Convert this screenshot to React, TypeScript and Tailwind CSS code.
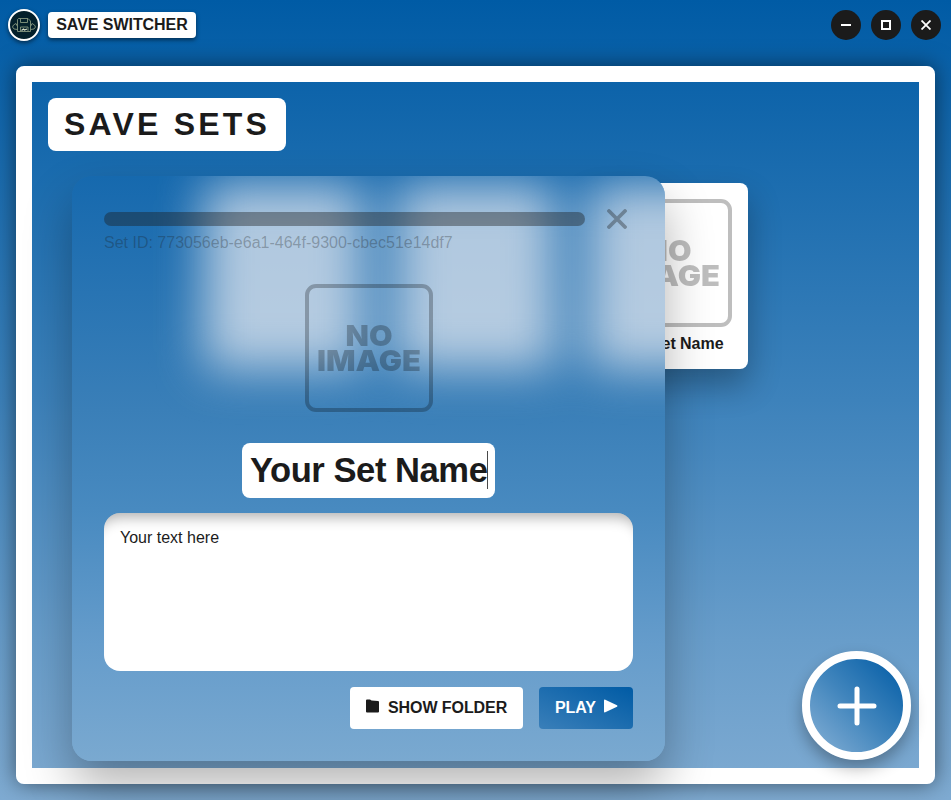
import React from "react";

function NoImage() {
  return (
    <svg width="128" height="128" viewBox="0 0 128 128" className="block shrink-0 opacity-25">
      <rect x="2" y="2" width="124" height="124" rx="9" fill="none" stroke="#000" strokeWidth="4" />
      <g
        fill="#000"
        fontWeight="900"
        fontSize="28.6"
        textAnchor="middle"
        className="font-[Inter,'Liberation_Sans',sans-serif]"
      >
        <text x="64" y="62" textLength="47" lengthAdjust="spacingAndGlyphs">NO</text>
        <text x="64" y="87" textLength="104" lengthAdjust="spacingAndGlyphs">IMAGE</text>
      </g>
    </svg>
  );
}

function SetCard() {
  return (
    <div className="flex w-40 flex-col items-center gap-2 rounded-lg bg-white p-4 shadow-[0_16px_32px_rgba(0,0,0,0.3)]">
      <NoImage />
      <span className="whitespace-nowrap text-base leading-[18px] font-bold tracking-[-0.05px]">Your Set Name</span>
    </div>
  );
}

function Logo() {
  return (
    <div className="size-8 rounded-full border-2 border-white bg-[#04202b] shadow-[0_2px_4px_rgba(0,0,0,0.5)]">
      <svg viewBox="0 0 28 28" width="28" height="28" fill="none" stroke="#84967f" strokeWidth="0.9">
        <path d="M8.500 7.500h9.500l2.500 2.500v10.500H7.500V8.500z" />
        <path d="M10.500 7.500v4h7v-4M10.500 20.500v-4.500h7.500v4.500" />
        <path d="M7.500 15.500L6 12.500 3.500 14 2.500 16 4 18l3.500 .5M20.500 15.500l1.500-3 2.500 1.500 1 2-1.500 2-3.500 .5" />
        <path d="M11.500 19.500l2-1.500 1 1 2.500-1" stroke="#d9dfc8" strokeWidth="1.200" />
      </svg>
    </div>
  );
}

function WindowButton({ children }: { children: React.ReactNode }) {
  return (
    <button className="flex size-[30px] items-center justify-center rounded-full bg-[#1b1b1b]">
      <svg width="10" height="10" viewBox="0 0 10 10" fill="none" stroke="#fff" strokeWidth="2">
        {children}
      </svg>
    </button>
  );
}

function GlassBackdrop() {
  return (
    <div className="absolute inset-0 overflow-hidden rounded-[20px] bg-[linear-gradient(180deg,#1669ae_0%,#3a7fb8_40%,#488ac0_57%,#659ccb_80%,#7aa9d0_100%)]">
      <div className="ml-[132px] flex gap-8 pt-[7px] blur-[24px]">
        <div className="h-[186px] w-40 shrink-0 rounded-lg bg-[#f0f0f3]/70" />
        <div className="h-[186px] w-40 shrink-0 rounded-lg bg-[#f0f0f3]/70" />
        <div className="h-[186px] w-40 shrink-0 rounded-lg bg-[#f0f0f3]/70" />
      </div>
    </div>
  );
}

function SetModal() {
  return (
    <div className="absolute top-[176px] left-[72px] h-[585px] w-[593px] rounded-[20px] shadow-[0_24px_48px_rgba(0,0,0,0.3)]">
      <GlassBackdrop />
      <div className="relative flex flex-col px-8 pt-[33px]">
        <div className="flex items-center justify-between pr-1.5">
          <div className="h-3.5 w-[481px] rounded-full bg-[#1b1b1b]/40" />
          <svg width="20" height="20" viewBox="0 0 20 20" className="opacity-35" stroke="#1b1b1b" strokeWidth="3.800" strokeLinecap="round">
            <path d="M2 2l16 16M18 2L2 18" />
          </svg>
        </div>
        <p className="mt-[5px] text-base leading-[18px] text-[#1b1b1b]/30">Set ID: 773056eb-e6a1-464f-9300-cbec51e14df7</p>
        <div className="mt-8 flex justify-center">
          <NoImage />
        </div>
        <div className="mt-[31px] flex h-[55px] w-[253px] items-center self-center rounded-lg bg-white pb-0.5 pl-2">
          <span className="text-[34.6px] leading-[38px] font-bold tracking-[-0.46px] whitespace-nowrap">Your Set Name</span>
          <span className="h-[38px] w-px shrink-0 bg-[#1b1b1b]/80" />
        </div>
        <div className="mt-[15px] h-[158px] rounded-2xl bg-white p-4 text-base leading-[18px] shadow-[inset_0_16px_14px_-12px_rgba(0,0,0,0.32)]">
          Your text here
        </div>
        <div className="mt-4 flex justify-end gap-4">
          <button className="flex h-[42px] w-[173px] items-center gap-2 rounded bg-white pl-4 text-base font-bold tracking-[-0.08px] whitespace-nowrap">
            <svg width="14" height="14" viewBox="0 0 14 14" className="-mt-1 shrink-0" fill="#1b1b1b">
              <path d="M0 1.500Q0 .5 1 .5H4L5.500 1.500 12 2Q13 2 13 3V12.500Q13 13.500 12 13.500H1Q0 13.500 0 12.500Z" />
            </svg>
            SHOW FOLDER
          </button>
          <button className="flex h-[42px] w-[94px] items-center gap-2 rounded bg-linear-to-tr/srgb from-[#3a7fb9] to-[#005ba5] pl-4 text-base font-bold tracking-[-0.1px] whitespace-nowrap text-white">
            PLAY
            <svg width="14" height="14" viewBox="0 0 14 14" className="-mt-1 shrink-0" fill="#fff">
              <path d="M0 1.500Q0 .2 1.300 .7L13 6.200Q14 7 13 7.800L1.300 13.300Q0 13.800 0 12.500Z" />
            </svg>
          </button>
        </div>
      </div>
    </div>
  );
}

export default function App() {
  return (
    <div className="relative flex h-[800px] w-[951px] flex-col overflow-hidden bg-[linear-gradient(180deg,#005ba5_0%,#3d82bb_50%,#689dca_80%,#7fabd2_100%)] font-['Liberation_Sans',Arial,sans-serif] text-[#1b1b1b]">
      <header className="flex h-[50px] items-center justify-between pr-2.5 pl-2">
        <div className="flex items-center gap-2">
          <Logo />
          <div className="flex h-[26px] w-[148px] items-center justify-center rounded bg-white text-base font-bold tracking-[-0.05px] whitespace-nowrap shadow-[0_2px_4px_rgba(0,0,0,0.5)]">
            SAVE SWITCHER
          </div>
        </div>
        <div className="flex gap-2.5">
          <WindowButton><path d="M0 5h10" /></WindowButton>
          <WindowButton><rect x="1" y="1" width="8" height="8" /></WindowButton>
          <WindowButton><path d="M.5 .5l9 9M9.500 .5l-9 9" strokeWidth="1.800" /></WindowButton>
        </div>
      </header>

      <main className="mx-4 mt-4 flex h-[718px] flex-col rounded-lg border-16 border-white p-4 shadow-[0_0_22px_rgba(0,0,0,0.5)]">
        <h1 className="w-[238px] rounded-lg bg-white py-2 pl-4 text-[32px] leading-[37px] font-bold tracking-[0.1em] whitespace-nowrap">
          SAVE SETS
        </h1>
        <section className="mt-8 grid grid-cols-[repeat(3,160px)] justify-center gap-8">
          <div className="col-start-3">
            <SetCard />
          </div>
        </section>
      </main>

      <button className="absolute right-10 bottom-10 flex size-[109px] items-center justify-center rounded-full border-8 border-white bg-linear-to-tr/srgb from-[#7facd3] from-5% via-[#3f84bc] to-[#005ba5] shadow-[0_8px_16px_rgba(0,0,0,0.3)]">
        <svg width="40" height="40" viewBox="0 0 40 40" stroke="#fff" strokeWidth="5" strokeLinecap="round">
          <path d="M20 3v34M3 20h34" />
        </svg>
      </button>

      <SetModal />
    </div>
  );
}
